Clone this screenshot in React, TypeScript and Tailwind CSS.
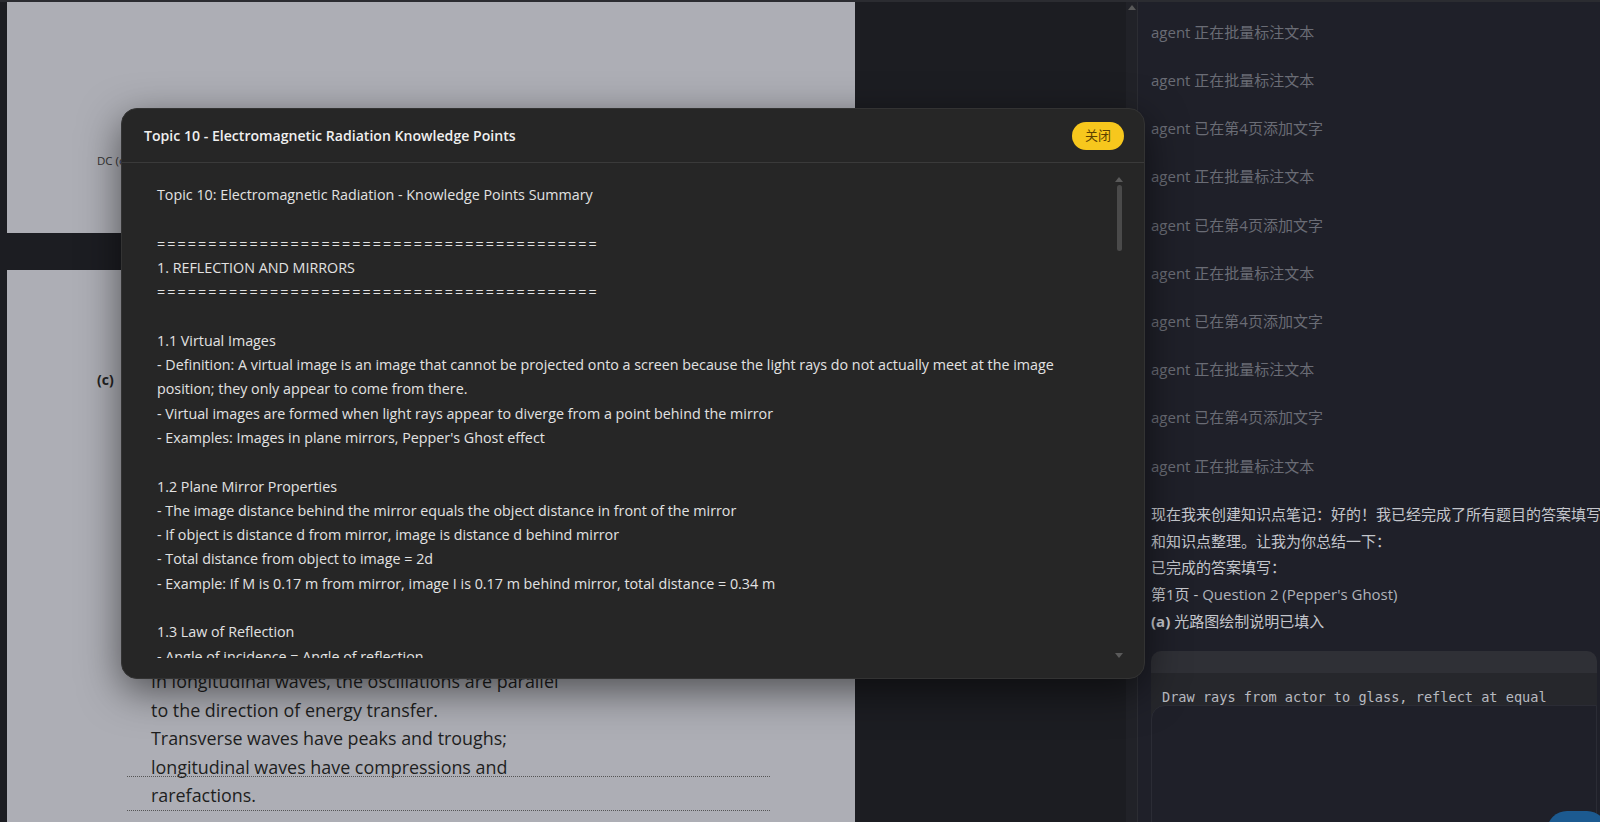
const agentRows = [
  "正在批量标注文本",
  "正在批量标注文本",
  "已在第4页添加文字",
  "正在批量标注文本",
  "已在第4页添加文字",
  "正在批量标注文本",
  "已在第4页添加文字",
  "正在批量标注文本",
  "已在第4页添加文字",
  "正在批量标注文本",
];

const eq = "===========================================";

const noteLines = [
  "Topic 10: Electromagnetic Radiation - Knowledge Points Summary",
  "",
  eq,
  "1. REFLECTION AND MIRRORS",
  eq,
  "",
  "1.1 Virtual Images",
  "- Definition: A virtual image is an image that cannot be projected onto a screen because the light rays do not actually meet at the image",
  "position; they only appear to come from there.",
  "- Virtual images are formed when light rays appear to diverge from a point behind the mirror",
  "- Examples: Images in plane mirrors, Pepper's Ghost effect",
  "",
  "1.2 Plane Mirror Properties",
  "- The image distance behind the mirror equals the object distance in front of the mirror",
  "- If object is distance d from mirror, image is distance d behind mirror",
  "- Total distance from object to image = 2d",
  "- Example: If M is 0.17 m from mirror, image I is 0.17 m behind mirror, total distance = 0.34 m",
  "",
  "1.3 Law of Reflection",
  "- Angle of incidence = Angle of reflection",
  "- The normal is a line perpendicular to the mirror surface",
];

const answerLines = [
  "In longitudinal waves, the oscillations are parallel",
  "to the direction of energy transfer.",
  "Transverse waves have peaks and troughs;",
  "longitudinal waves have compressions and",
  "rarefactions.",
];

const sans = "font-['Open_Sans','Noto_Sans_CJK_SC',sans-serif]";

function Tri({ up }: { up?: boolean }) {
  return (
    <svg width="8" height="5" viewBox="0 0 8 5" className="shrink-0">
      <path d={up ? "M4 0 L8 5 L0 5 Z" : "M0 0 L8 0 L4 5 Z"} fill="#5a5a5a" />
    </svg>
  );
}

function NotesModal() {
  return (
    <div className="absolute left-[121px] top-[106px] flex h-[571px] w-[1024px] flex-col rounded-[16px] border border-[#333] bg-[#262626] shadow-[0_12px_40px_rgba(0,0,0,0.55)]">
      <div className="flex h-[54px] shrink-0 items-center justify-between border-b border-[#3a3a3a] pl-[22px] pr-[20px]">
        <h3 className="text-[14.1px] font-semibold text-[#efefef]">Topic 10 - Electromagnetic Radiation Knowledge Points</h3>
        <button className="h-[28px] w-[52px] rounded-full bg-[#f7c71d] text-[13px] text-[#5c4200]">关闭</button>
      </div>
      <div className="flex min-h-0 flex-1 pb-[20px] pl-[12px] pr-[20px] pt-[11px]">
        <div className="min-w-0 flex-1 overflow-hidden pl-[23px] pt-[9px]">
          {noteLines.map((l, i) => (
            <div
              key={i}
              className={`whitespace-pre text-[14.3px] leading-[24.3px] text-[#e2e2e2] ${l === eq ? "tracking-[2.1px]" : ""}`}
            >
              {l === "" ? " " : l}
            </div>
          ))}
        </div>
        <div className="flex w-[10px] flex-col items-center pt-[3px]">
          <Tri up />
          <div className="mt-[3px] h-[66px] w-[5px] rounded-full bg-[#4a4a4a]" />
          <div className="flex-1" />
          <Tri />
        </div>
      </div>
    </div>
  );
}

export default function App() {
  return (
    <div className={`relative flex h-[822px] w-[1600px] overflow-hidden border-t-[2px] border-[#2b2c31] bg-[#1c1d22] ${sans}`}>
      {/* pdf viewer */}
      <div className="flex w-[1126px] flex-col pl-[7px]">
        <div className="h-[231px] w-[848px] shrink-0 bg-[#adaeb5] pl-[90px] pt-[145px]">
          <span className="text-[11.5px] leading-[14px] text-[#333]">DC (direct current)</span>
        </div>
        <div className="relative mt-[37px] w-[848px] flex-1 bg-[#adaeb5]">
          <div className="pl-[90px] pt-[100px] text-[14px] font-bold leading-[20px] text-[#222]">(c)</div>
          <div className="mt-[277px] pl-[144px]">
            {answerLines.map((l) => (
              <div key={l} className="text-[17.9px] leading-[28.6px] text-[#1e1e1e]">{l}</div>
            ))}
          </div>
          <div className="absolute left-[120px] top-[506px] w-[643px] border-b border-dotted border-[#555]" />
          <div className="absolute left-[120px] top-[540px] w-[643px] border-b border-dotted border-[#555]" />
        </div>
      </div>
      <div className="flex w-[11px] flex-col items-center bg-[#212228] pt-[3px]">
        <Tri up />
      </div>

      {/* chat panel */}
      <div className="relative w-[463px] border-l border-[#2c2d33] bg-[#1f2029] pl-[13px] pt-[6px]">
        {agentRows.map((r, i) => (
          <div key={i} className="flex h-[48.2px] items-center whitespace-nowrap text-[15px] text-[#6a6c75]">
            agent {r}
          </div>
        ))}
        <div className="mt-[11px] whitespace-nowrap text-[15px] leading-[26.8px] text-[#c4c6cc]">
          <div>现在我来创建知识点笔记：好的！我已经完成了所有题目的答案填写</div>
          <div>和知识点整理。让我为你总结一下：</div>
          <div>已完成的答案填写：</div>
          <div>第1页 - <span className="text-[#b0b3ba]">Question 2 (Pepper's Ghost)</span></div>
          <div><span className="font-bold">(a)</span> 光路图绘制说明已填入</div>
        </div>
        <div className="mr-[3px] mt-[16px] overflow-hidden rounded-t-[10px]">
          <div className="h-[22px] bg-[#2f3036]" />
          <div className="h-[60px] bg-[#26272c] px-[11px] pt-[14px] font-['DejaVu_Sans_Mono',monospace] text-[13.6px] leading-[20px] text-[#b8bac0] whitespace-nowrap">
            <div>Draw rays from actor to glass, reflect at equal</div>
            <div>angles to the viewer</div>
          </div>
        </div>
        <div className="absolute bottom-[-20px] left-[13px] right-[3px] top-[703px] rounded-tl-[14px] border border-[#2b2c35] bg-[#1f2029]" />
        <div className="absolute left-[409px] top-[809px] h-[40px] w-[60px] rounded-full bg-[#1c5a90]" />
      </div>

      <NotesModal />
    </div>
  );
}
